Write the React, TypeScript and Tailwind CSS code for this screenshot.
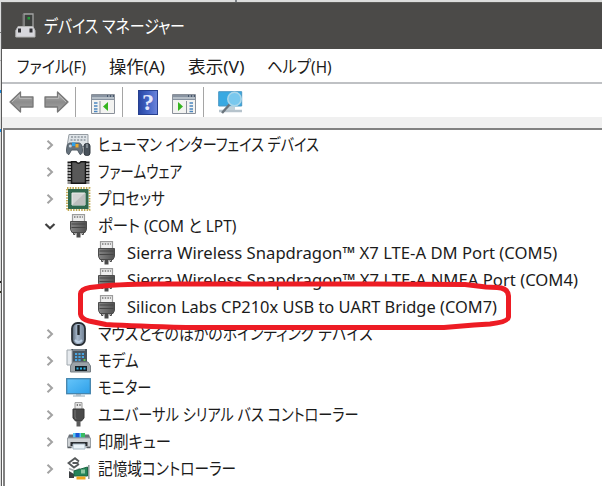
import { useLayoutEffect, useRef, useState, type ReactNode } from "react";

/** One line of text, squeezed horizontally to the given width. */
function Fit({ w, className = "", children }: { w: number; className?: string; children: ReactNode }) {
  const ref = useRef<HTMLSpanElement>(null);
  const [k, setK] = useState(1);
  useLayoutEffect(() => {
    if (ref.current) setK(w / ref.current.offsetWidth);
  }, [w]);
  return (
    <div className="shrink-0" style={{ width: w }}>
      <span
        ref={ref}
        className={"inline-block origin-left whitespace-nowrap [font-feature-settings:'palt'] " + className}
        style={{ transform: `scaleX(${k})` }}
      >
        {children}
      </span>
    </div>
  );
}

const svg = "block shrink-0 overflow-visible";

function TitleIcon() {
  return (
    <svg className={svg} width="21" height="25" viewBox="0 0 21 25">
      <path d="M9 1h9v14H9z" fill="#3d403e" stroke="#a3a3a3" strokeWidth="1.3" />
      <path d="M8 1v14" stroke="#777" />
      <rect x="12.500" y="4" width="2.500" height="2.500" fill="#249c39" />
      <path d="M3 13.500h15l2 4v6.500H.8v-6.500z" fill="#d7d7dc" stroke="#b4b4b4" />
      <rect x="3" y="15.500" width="3" height="4" fill="#303034" />
      <rect x="14.500" y="15.500" width="3" height="4" fill="#303034" />
    </svg>
  );
}

function Arrow({ flip = false }: { flip?: boolean }) {
  return (
    <svg className={svg + (flip ? " -scale-x-100" : "")} width="25" height="22" viewBox="0 0 25 22">
      <defs>
        <linearGradient id="arrow" x2="0" y2="1">
          <stop stopColor="#b4b4b4" />
          <stop offset=".5" stopColor="#8c8c8c" />
          <stop offset="1" stopColor="#a8a8a8" />
        </linearGradient>
      </defs>
      <path d="M1 11 11.500 1v5H24v10H11.500v5z" fill="url(#arrow)" stroke="#777" strokeWidth="1.300" strokeLinejoin="round" />
      <path d="M3 11l7.300-7v3.300h12.200" fill="none" stroke="#bcbcbc" />
    </svg>
  );
}

function Pane({ flip = false }: { flip?: boolean }) {
  return (
    <svg className={svg} width="24" height="20" viewBox="0 0 24 20">
      <path d="M.5.5h23v19H.5z" fill="#f3f3f1" stroke="#8b919a" />
      <path d="M1 1h22v5H1z" fill="#8893a1" />
      <path d="M1 4h22" stroke="#c5ccd4" strokeWidth="1.500" />
      <path d="M16 2h1m2 0h1m2 0h1" stroke="#32445b" strokeWidth="1.500" />
      {flip ? (
        <>
          <path d="M14.500 7v12" stroke="#8b919a" />
          <path d="M17.500 9h3.500m-3.500 3h3.500m-3.500 3h3.500m-3.500 2.500h3.500" stroke="#4c86bf" strokeWidth="1.300" />
          <path d="M6 8l5 4.500L6 17z" fill="#35b51f" />
        </>
      ) : (
        <>
          <path d="M9 7v12" stroke="#8b919a" />
          <path d="M3 9h3.500m-3.500 3h3.500m-3.500 3h3.500m-3.500 2.500h3.500" stroke="#4c86bf" strokeWidth="1.300" />
          <path d="M17 8l-5 4.500 5 4.500z" fill="#35b51f" />
        </>
      )}
    </svg>
  );
}

function HelpIcon() {
  return (
    <div className="flex h-[25px] w-5 shrink-0 items-center justify-center border border-[#27408f] bg-linear-to-r from-[#2947a4] via-[#4263c4] to-[#6b83da] font-['Liberation_Serif',serif] text-[24px] leading-none font-bold text-[#e4e7fb]">
      ?
    </div>
  );
}

function ScanIcon() {
  return (
    <svg className={svg} width="25" height="24" viewBox="0 0 25 24">
      <path d="M.7 1.700h23v14.300H.7z" fill="#38a9e2" stroke="#4b97c3" />
      <path d="M1 21h23" stroke="#b6c3cc" strokeWidth="2.500" />
      <path d="M9 16.500h8v3.500H9z" fill="#c0d0d9" />
      <path d="M12 14l-8 9" stroke="#6a747c" strokeWidth="2.500" />
      <circle cx="16.500" cy="9" r="6.700" fill="#79c8ee" stroke="#a9d6ea" strokeWidth="1.600" />
    </svg>
  );
}

function HidIcon() {
  return (
    <svg className={svg} width="25" height="22" viewBox="0 0 25 22">
      <path d="M3 .5h19v12H1z" fill="#dfe4e8" stroke="#969da3" />
      <path d="M5 3h15M4.500 6h15" stroke="#8e979f" strokeWidth="1.500" strokeDasharray="2 1.300" />
      <path d="M4 9q-3 0-3.500 7Q.5 20.500 3 20.500L5.500 16h6l2.500 4.500q2.500 0 2.500-4.500Q16 9 13 9z" fill="#66727d" stroke="#525c65" />
      <rect x="6" y="8.500" width="3.500" height="3.500" fill="#2da0e8" />
      <rect x="9.500" y="10" width="3" height="3.500" fill="#eda92c" />
      <circle cx="4.300" cy="12" r="1.500" fill="#c6d1da" />
      <rect x="18" y="9.500" width="6" height="12" rx="2.500" fill="#49525b" stroke="#313840" />
      <path d="M21 10v4" stroke="#b6c0c8" />
    </svg>
  );
}

function FirmwareIcon() {
  return (
    <svg className={svg} width="25" height="23" viewBox="0 0 25 23">
      <path d="M3.500.5v22M21.500.5v22" stroke="#1c1c1c" strokeWidth="4" strokeDasharray="1.900 1.100" />
      <path d="M5.500.7H10q2.500 3 5 0h4.500v21.600h-14z" fill="#585858" stroke="#161616" strokeWidth="1.500" />
      <path d="M4 2.500v18M21 2.500v18" stroke="#ddd" strokeWidth="1.400" strokeDasharray="1.300 1.700" />
    </svg>
  );
}

function CpuIcon() {
  return (
    <svg className={svg} width="25" height="24" viewBox="0 0 25 24">
      <rect x="1" y="1" width="22.500" height="22" fill="none" stroke="#c0a850" strokeWidth="1.800" strokeDasharray="1.500 1.200" />
      <rect x="2" y="2" width="20.500" height="20" fill="#2f694f" />
      <path d="M6 6h13v12H6z" fill="#d2d4d3" stroke="#eceeec" />
      <path d="M6 18 19 6v12z" fill="#bcbfbe" />
    </svg>
  );
}

function PortIcon() {
  return (
    <svg className={svg} width="17" height="24" viewBox="0 0 17 24">
      <defs>
        <linearGradient id="plug">
          <stop stopColor="#858585" />
          <stop offset="1" stopColor="#505050" />
        </linearGradient>
      </defs>
      <path d="M2.500 8V.6h12V8" fill="#eee" stroke="#9c9c9c" strokeWidth="1.200" />
      <path d="M4 3h1.500m1.200 0h1.500m1.200 0h1.500m1 0h1" stroke="#777" strokeWidth="1.500" />
      <path d="M.5 7.500h16v8l-1.500 3h-13l-1.500-3z" fill="url(#plug)" stroke="#4c4c4c" />
      <path d="M1.500 10h14M1.500 13.500h14" stroke="#454545" />
      <path d="M3.500 18v2.500h1.500V18m7 0v2.500h1.500V18" stroke="#4a4a4a" fill="none" />
      <path d="M6.500 18h4v5.500h-4z" fill="#4a4a4a" />
    </svg>
  );
}

function MouseIcon() {
  return (
    <svg className={svg} width="15" height="24" viewBox="0 0 15 24">
      <defs>
        <linearGradient id="mouse">
          <stop stopColor="#52606f" />
          <stop offset=".4" stopColor="#a9bace" />
          <stop offset="1" stopColor="#6e7e90" />
        </linearGradient>
      </defs>
      <rect x="1" y="1" width="13" height="22" rx="5.500" fill="url(#mouse)" stroke="#292f35" strokeWidth="1.800" />
      <path d="M7.500 3v10" stroke="#22272c" strokeWidth="2.400" />
      <path d="M4 18q3.500 4 7 0" fill="none" stroke="#bdd0e4" strokeWidth="2" />
    </svg>
  );
}

function ModemIcon() {
  return (
    <svg className={svg} width="25" height="25" viewBox="0 0 25 25">
      <path d="M5 1h16v14H3z" fill="#4a555e" />
      <path d="M1 2h5v15H1z" fill="#e5e9ed" stroke="#a1a9af" />
      <path d="M7 2h12" stroke="#adb8bf" />
      <path d="M9 6h9M9 9h9M9 12h6" stroke="#49a5e1" strokeWidth="1.800" strokeDasharray="2.200 1.200" />
      <rect x="17.500" y="11" width="2" height="2" fill="#62c44c" />
      <path d="M7 14h15l2.500 4v6H4.500v-6z" fill="#9ca3a8" stroke="#777f84" />
      <path d="M9 18h12v5H9z" fill="#172027" />
      <path d="M10.500 20.500h9" stroke="#2cb2e3" strokeWidth="2" strokeDasharray="2 1.500" />
    </svg>
  );
}

function MonitorIcon() {
  return (
    <svg className={svg} width="25" height="19" viewBox="0 0 25 19">
      <defs>
        <linearGradient id="screen" x2="1" y2="1">
          <stop stopColor="#66c5fa" />
          <stop offset="1" stopColor="#2d9fe9" />
        </linearGradient>
      </defs>
      <rect x=".7" y=".7" width="23.600" height="15" fill="url(#screen)" stroke="#4383ac" strokeWidth="1.300" />
      <path d="M10 16h5v1.500h-5z" fill="#a0b1bc" />
      <path d="M7 18h12" stroke="#8ca6b6" />
    </svg>
  );
}

function UsbIcon() {
  return (
    <svg className={svg} width="13" height="25" viewBox="0 0 13 25">
      <path d="M3 8V.6h7V8" fill="#e9e9e9" stroke="#999" />
      <path d="M4.700 3h1.300m1.300 0h1.300" stroke="#555" strokeWidth="1.500" />
      <path d="M1 7h11v9l-2.500 3h-6L1 16z" fill="#4a4a4a" stroke="#373737" />
      <path d="M3 8v7l1 2" fill="none" stroke="#777" />
      <path d="M4.500 19h4v5.500h-4z" fill="#5a5a5a" />
    </svg>
  );
}

function PrinterIcon() {
  return (
    <svg className={svg} width="24" height="17" viewBox="0 0 24 17">
      <path d="M2 1.500h20l1.500 4H.5z" fill="#697078" />
      <path d="M6 0h12v4.500H6z" fill="#55c8ee" />
      <path d="M8.500 0h4v4.500h-4z" fill="#1b55d6" />
      <path d="M14 0h4v4.500h-4z" fill="#38bb61" />
      <path d="M.5 5h23v9H.5z" fill="#cdd1d4" stroke="#9aa0a5" />
      <path d="M3.500 9h17v4h-17z" fill="#2b2f32" />
      <path d="M.5 14.500h4m15 0h4" stroke="#555b60" strokeWidth="1.500" />
      <path d="M6 11h12v5H6z" fill="#eaf3f8" stroke="#a6b7c2" />
    </svg>
  );
}

function StorageIcon() {
  return (
    <svg className={svg} width="23" height="23" viewBox="0 0 23 23">
      <path d="M2 14l5 3v4H2z" fill="#3d4144" />
      <path d="M12 4.500 8 1.200 1.500 6 7 10.500l5-3.500M5.500 6h6" fill="none" stroke="#55585a" strokeWidth="1.800" />
      <path d="M2 11.500l6 2.500 5-2.500" fill="none" stroke="#a5aaac" strokeWidth="1.500" />
      <path d="M7 14 20.500 10v9H7z" fill="#26855a" stroke="#1b6643" />
      <path d="M21.800 8v14" stroke="#8d9799" strokeWidth="1.500" />
      <path d="M14 12.500h4v4h-4z" fill="#8cc8a2" />
      <path d="M9.500 19.500h9v3h-9z" fill="#eda51e" />
    </svg>
  );
}

function Chevron({ open = false }: { open?: boolean }) {
  return (
    <svg className={svg} width="14" height="14" viewBox="0 0 14 14">
      {open ? (
        <path d="M2.500 5 7 9.300 11.500 5" fill="none" stroke="#404040" strokeWidth="2.200" />
      ) : (
        <path d="M4.500 2.700 9 7l-4.500 4.300" fill="none" stroke="#a3a3a3" strokeWidth="2" />
      )}
    </svg>
  );
}

type Row = { text: string; w: number; icon: ReactNode; open?: boolean; child?: boolean };

const rows: Row[] = [
  { text: "ヒューマン インターフェイス デバイス", w: 221, icon: <HidIcon /> },
  { text: "ファームウェア", w: 84, icon: <FirmwareIcon /> },
  { text: "プロセッサ", w: 67, icon: <CpuIcon /> },
  { text: "ポート (COM と LPT)", w: 138, icon: <PortIcon />, open: true },
  { text: "Sierra Wireless Snapdragon™ X7 LTE-A DM Port (COM5)", w: 430, icon: <PortIcon />, child: true },
  { text: "Sierra Wireless Snapdragon™ X7 LTE-A NMEA Port (COM4)", w: 451, icon: <PortIcon />, child: true },
  { text: "Silicon Labs CP210x USB to UART Bridge (COM7)", w: 370, icon: <PortIcon />, child: true },
  { text: "マウスとそのほかのポインティング デバイス", w: 275, icon: <MouseIcon /> },
  { text: "モデム", w: 41, icon: <ModemIcon /> },
  { text: "モニター", w: 53, icon: <MonitorIcon /> },
  { text: "ユニバーサル シリアル バス コントローラー", w: 261, icon: <UsbIcon /> },
  { text: "印刷キュー", w: 73, icon: <PrinterIcon /> },
  { text: "記憶域コントローラー", w: 138, icon: <StorageIcon /> },
];

function TreeRow({ row }: { row: Row }) {
  return (
    <div className={"flex h-[26.93px] shrink-0 items-center " + (row.child ? "pl-[88px]" : "pl-[38px]")}>
      {!row.child && (
        <div className="mr-2 shrink-0">
          <Chevron open={row.open} />
        </div>
      )}
      <div className={"flex shrink-0 justify-center " + (row.child ? "mr-2 w-[26px]" : "mr-[6px] w-[27px]")}>{row.icon}</div>
      <Fit w={row.w} className="text-[17px] leading-[26px]">
        {row.text}
      </Fit>
    </div>
  );
}

const menus = [
  { text: "ファイル(F)", w: 69 },
  { text: "操作(A)", w: 56 },
  { text: "表示(V)", w: 56 },
  { text: "ヘルプ(H)", w: 65 },
];

function Divider() {
  return <div className="h-[30px] w-px shrink-0 bg-[#a5a5a5]" />;
}

export default function App() {
  return (
    <div className="relative flex h-[486px] w-[602px] flex-col overflow-hidden bg-[#dcdddd] pt-0.5 font-['Noto_Sans','Noto_Sans_CJK_JP',sans-serif] text-[#1b1b1b]">
      <div className="absolute top-0 left-[235px] h-0.5 w-0.5 bg-[#7d8287]" />
      <div className="absolute top-[32px] left-0 h-px w-px bg-[#777]" />
      <div className="absolute top-[60px] left-0 h-px w-px bg-[#aaa]" />
      <div className="absolute top-[90px] left-0 h-[3px] w-px bg-[#1685d9]" />
      <div className="absolute top-[129px] left-0 h-[3px] w-px bg-[#1685d9]" />
      <div className="absolute top-[281px] left-0 h-0.5 w-px bg-[#222]" />
      <div className="absolute top-[291px] left-0 h-0.5 w-px bg-[#332]" />
      <div className="ml-px flex grow flex-col border-l border-[#5b5b5b] bg-white">
        <header className="flex h-[47px] shrink-0 items-center gap-2 border-t border-[#5c5c59] bg-[#4b4a48] pl-[13px]">
          <div className="-mt-0.5">
            <TitleIcon />
          </div>
          <Fit w={141} className="text-[18px] leading-6 text-white">
            デバイス マネージャー
          </Fit>
        </header>
        <nav className="flex h-[33px] shrink-0 items-center gap-[23px] pl-[15px] pt-0.5">
          {menus.map((m) => (
            <Fit key={m.text} w={m.w} className="text-[17px] leading-6">
              {m.text}
            </Fit>
          ))}
        </nav>
        <div className="flex h-[35px] shrink-0 items-center border-t-2 border-[#bfc1c4] pt-[3px] pl-[7px]">
          <Arrow />
          <div className="ml-[10px]">
            <Arrow flip />
          </div>
          <div className="ml-[6px]">
            <Divider />
          </div>
          <div className="mt-[3px] ml-[15px]">
            <Pane />
          </div>
          <div className="ml-[7px]">
            <Divider />
          </div>
          <div className="ml-[15px]">
            <HelpIcon />
          </div>
          <div className="mt-[3px] ml-[14px]">
            <Pane flip />
          </div>
          <div className="ml-[7px]">
            <Divider />
          </div>
          <div className="ml-[14px]">
            <ScanIcon />
          </div>
        </div>
        <div className="h-[11px] shrink-0 bg-[#f0f0f0]" />
        <main className="ml-px flex grow flex-col border-t-2 border-l-2 border-[#828282] pt-0.5">
          {rows.map((row) => (
            <TreeRow key={row.text} row={row} />
          ))}
        </main>
      </div>
      <svg className="absolute top-[276px] left-[76px]" width="440" height="60" viewBox="0 0 440 60">
        <path
          d="M14 11.500Q5 13 4.500 18V38Q5 43 13 45L30 48.500Q60 50 110 51.500H304L368 51.500L398 49L414 48Q432 46 432.500 41V20Q432 12 421 11.500L410 11L389 8.500L300 8H80Q40 8 14 11.500Z"
          fill="none"
          stroke="#ed1c24"
          strokeWidth="5"
          strokeLinejoin="round"
        />
      </svg>
    </div>
  );
}
